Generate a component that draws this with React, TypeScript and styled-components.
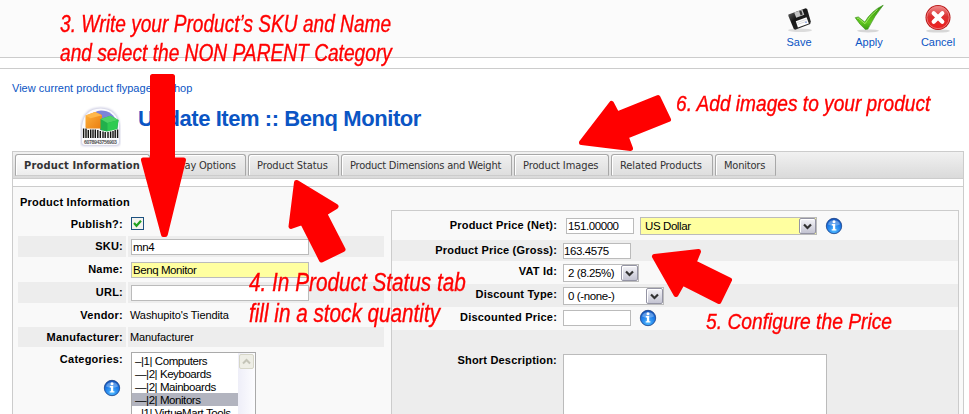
import React from "react";
import styled, { createGlobalStyle, css } from "styled-components";

const Global = createGlobalStyle`
  * { box-sizing: border-box; }
  body { margin: 0; background: #fff; overflow: hidden; }
`;

const Page = styled.div`
  position: relative;
  width: 969px;
  height: 414px;
  overflow: hidden;
  background: #fff;
  color: #000;
  font: 11px/13px "Liberation Sans", Arial, sans-serif;
  white-space: nowrap;
`;

const Toolbar = styled.header`
  display: flex;
  justify-content: flex-end;
  height: 58px;
  padding-top: 4px;
  background: #fbfbfb;
  border-bottom: 1px solid #ccc;
`;

const ToolButton = styled.a<{ $width: number }>`
  display: flex;
  flex-direction: column;
  align-items: center;
  gap: 3px;
  width: ${(p) => p.$width}px;
  color: #0b55c4;
`;

const Divider = styled.div`
  height: 11px;
  border-bottom: 1px solid #ccc;
`;

const Flypage = styled.a`
  display: block;
  margin: 13px 0 0 12px;
  line-height: 13px;
  letter-spacing: 0.02px;
  color: #0b55c4;
`;

const Heading = styled.div`
  display: flex;
  height: 56px;
  padding: 11px 0 0 80px;
  gap: 17px;
`;

const Title = styled.h1`
  margin: 1px 0 0;
  font: bold 22px/24px "Liberation Sans", Arial, sans-serif;
  letter-spacing: -0.43px;
  color: #0b55c4;
`;

const TabPane = styled.main`
  width: 952px;
  margin-left: 12px;
  border: 1px solid #ccc;
  border-bottom: 0;
`;

const TabBar = styled.nav`
  display: flex;
  gap: 2px;
  height: 27px;
  padding: 2px 2px 0;
  background: linear-gradient(#f1f1f1, #dadada);
  border-bottom: 1px solid #ccc;
`;

const Tab = styled.div<{ $width: number; $active?: boolean; $tight?: number }>`
  width: ${(p) => p.$width}px;
  height: 22px;
  padding-left: 8px;
  border: 1px solid #a8a8a8;
  border-bottom-color: #ccc;
  border-radius: 3px 3px 0 0;
  box-shadow: inset 1px 1px 0 #fff;
  background: linear-gradient(#f0f0f0, #dedede);
  color: #333;
  font: 11px/21px "DejaVu Sans Condensed", "DejaVu Sans", Tahoma, sans-serif;
  letter-spacing: ${(p) => p.$tight ?? -0.1}px;
  ${(p) =>
    p.$active &&
    css`
      font-weight: bold;
      background: linear-gradient(#fff, #ececec);
    `}
`;

const Panel = styled.section`
  display: flex;
  gap: 7px;
  height: 240px;
  margin-top: 7px;
  padding: 0 4px 0 5px;
  background: #f9f9f9;
  border-top: 1px solid #ccc;
`;

const InfoColumn = styled.div`
  width: 366px;
`;

const SectionTitle = styled.h2`
  margin: 9px 0 5px 2px;
  font: bold 11px/13px "Liberation Sans", Arial, sans-serif;
  letter-spacing: 0.25px;
`;

const InfoRow = styled.div<{ $height?: number; $shaded?: boolean }>`
  display: grid;
  grid-template-columns: 108px 256px;
  column-gap: 2px;
  height: ${(p) => p.$height ?? 21}px;
  margin-bottom: 2px;
  > * { background: ${(p) => (p.$shaded ? "#ededed" : "transparent")}; }
`;

const InfoLabel = styled.div`
  padding: 4px 3px 0 0;
  text-align: right;
  font-weight: bold;
  letter-spacing: 0.24px;
`;

const InfoValue = styled.div`
  display: flex;
  align-items: flex-start;
  padding: 3px 0 0 3px;
`;

const PlainValue = styled.div`
  padding: 4px 0 0 2px;
  letter-spacing: -0.1px;
`;

const HelpSlot = styled.div`
  display: flex;
  justify-content: flex-end;
  padding: 13px 2px 0 0;
`;

const Field = styled.div<{ $width: number; $highlight?: boolean; $tight?: boolean }>`
  width: ${(p) => p.$width}px;
  height: 16px;
  padding-left: ${(p) => (p.$tight ? 0 : 1)}px;
  border: 1px solid #bbb;
  background: ${(p) => (p.$highlight ? "#ffffa0" : "#fff")};
  font-size: 11.5px;
  line-height: 15px;
  letter-spacing: -0.42px;
`;

const CheckBox = styled.div`
  display: flex;
  align-items: center;
  justify-content: center;
  width: 13px;
  height: 13px;
  border: 1px solid #1d5180;
  background: #f3f3ef;
`;

const CategoryList = styled.div`
  display: flex;
  width: 125px;
  height: 80px;
  border: 1px solid #aaa;
  background: #fff;
`;

const Options = styled.div`
  flex: 1;
  padding-top: 1px;
`;

const Option = styled.div<{ $selected?: boolean }>`
  height: 13px;
  padding-left: 3px;
  background: ${(p) => (p.$selected ? "#b2b4bf" : "transparent")};
  font-size: 11.5px;
  line-height: 15px;
  letter-spacing: -0.43px;
`;

const ScrollTrack = styled.div`
  width: 17px;
  padding: 1px;
  background: linear-gradient(90deg, #eeeef8, #fdfdff);
`;

const ScrollButton = styled.div`
  display: flex;
  align-items: center;
  justify-content: center;
  width: 15px;
  height: 15px;
  border: 1px solid #d6d6c8;
  border-radius: 2px;
  background: #eeeee6;
`;

const PriceColumn = styled.div`
  width: 569px;
  margin-top: 23px;
  border: 1px solid #ccc;
  border-bottom: 0;
`;

const PriceRow = styled.div<{ $height: number; $top: number; $shaded?: boolean }>`
  display: flex;
  align-items: flex-start;
  height: ${(p) => p.$height}px;
  padding-top: ${(p) => p.$top}px;
  background: ${(p) => (p.$shaded ? "#ededed" : "#f9f9f9")};
`;

const PriceLabel = styled.div<{ $drop?: number; $gap?: number }>`
  width: 165px;
  margin: ${(p) => p.$drop ?? 1}px ${(p) => p.$gap ?? 6}px 0 0;
  text-align: right;
  font-weight: bold;
  letter-spacing: 0.2px;
`;

const SelectBox = styled.div<{ $width: number; $highlight?: boolean; $offset?: number }>`
  display: flex;
  justify-content: space-between;
  width: ${(p) => p.$width}px;
  height: 18px;
  margin: -1px 0 0 ${(p) => p.$offset ?? 0}px;
  padding-left: 4px;
  border: 1px solid #bbb;
  background: ${(p) => (p.$highlight ? "#ffffa0" : "#fff")};
  font-size: 11.5px;
  line-height: 17px;
  letter-spacing: -0.4px;
`;

const SelectArrow = styled.div`
  display: flex;
  align-items: center;
  justify-content: center;
  width: 17px;
  height: 16px;
  border: 1px solid #9494a4;
  border-radius: 2px;
  box-shadow: inset 1px 1px 0 #fff;
  background: linear-gradient(#f4f4f8, #c4c4d2);
`;

const InfoSlot = styled.div`
  display: flex;
  margin: -1px 0 0 8px;
`;

const TextArea = styled.div`
  width: 264px;
  height: 90px;
  border: 1px solid #bbb;
  background: #fff;
`;

const ArrowLayer = styled.svg`
  position: absolute;
  inset: 0;
  pointer-events: none;
`;

const Note = styled.div<{ $x: number; $y: number; $size: number; $squeeze: number }>`
  position: absolute;
  left: ${(p) => p.$x}px;
  top: ${(p) => p.$y}px;
  font: italic ${(p) => p.$size}px/30px "Liberation Sans", Arial, sans-serif;
  color: #f00;
  -webkit-text-stroke: 0.35px #f00;
  transform: scaleX(${(p) => p.$squeeze});
  transform-origin: 0 0;
`;

const InfoIcon = () => (
  <svg width="18" height="18" viewBox="0 0 18 18">
    <defs>
      <radialGradient id="infoBlue" cx=".5" cy=".8" r=".8">
        <stop offset="0" stopColor="#4fbaff" />
        <stop offset=".6" stopColor="#1c7ae8" />
        <stop offset="1" stopColor="#1450b4" />
      </radialGradient>
    </defs>
    <circle cx="9" cy="9" r="7.7" fill="url(#infoBlue)" stroke="#173f86" strokeWidth=".8" />
    <path d="M3 7.5a6.2 5.6 0 0 1 12 0q-6 2.5-12 0z" fill="#fff" opacity=".3" />
    <circle cx="9" cy="4.800" r="1.500" fill="#fff" />
    <path d="M6.800 7h3.400v5.200h1.200v1.400H6.700v-1.400h1.200V8.400H6.800z" fill="#fff" />
  </svg>
);

const Chevron = () => (
  <svg width="9" height="7" viewBox="0 0 9 7">
    <path d="M1 1.5l3.5 3.5L8 1.5" fill="none" stroke="#333" strokeWidth="2.2" />
  </svg>
);

const SaveIcon = () => (
  <svg width="32" height="29" viewBox="0 0 32 29">
    <defs>
      <linearGradient id="disk" x1="0" y1="0" x2="1" y2="1">
        <stop offset="0" stopColor="#777" />
        <stop offset=".4" stopColor="#161616" />
        <stop offset="1" stopColor="#333" />
      </linearGradient>
    </defs>
    <ellipse cx="17" cy="26.2" rx="12" ry="1.8" fill="#000" opacity=".12" />
    <path d="M5.400 10.500L22.700 4.200l1.500.8 3.600 12.600-.6 2.400-15 5.800-1.400-.7-5.400-13z" fill="url(#disk)" />
    <path d="M11.200 8.600l8.200-2.800 1.900 5-8.100 3z" fill="#c4c4c4" />
    <path d="M16.200 7.300l2.100-.7 1.400 4-2.100.8z" fill="#333" />
    <path d="M12.800 17.200l10.700-3.900 2.400 6.200-11 4z" fill="#fff" />
    <path d="M14 18.600l9.500-3.300M14.700 20.400l9.600-3.400" stroke="#ccc" strokeWidth=".7" />
    <circle cx="23" cy="18.300" r=".8" fill="#68d" />
  </svg>
);

const ApplyIcon = () => (
  <svg width="32" height="29" viewBox="0 0 32 29">
    <defs>
      <linearGradient id="tick" x1="0" y1="0" x2="0" y2="1">
        <stop offset="0" stopColor="#2f8f0c" />
        <stop offset=".7" stopColor="#62c81e" />
        <stop offset="1" stopColor="#3b9c12" />
      </linearGradient>
    </defs>
    <ellipse cx="15" cy="26.800" rx="11" ry="1.600" fill="#000" opacity=".14" />
    <path d="M2.200 13.700l3.100-.8 6.500 5.200Q18 7 30.200 1.200 21.500 11.500 14.900 25.100l-2.500.4Q7 21 2.200 13.700z" fill="url(#tick)" stroke="#338d10" strokeWidth=".6" />
    <path d="M4.200 14.500l1-.4 6.800 5.600Q17 11 24.500 5.500" fill="none" stroke="#a8ea6c" strokeWidth=".9" />
  </svg>
);

const CancelIcon = () => (
  <svg width="32" height="29" viewBox="0 0 32 29">
    <defs>
      <linearGradient id="stop" x1="0" y1="0" x2="0" y2="1">
        <stop offset="0" stopColor="#ee8a8a" />
        <stop offset=".45" stopColor="#dc3030" />
        <stop offset="1" stopColor="#ee2020" />
      </linearGradient>
    </defs>
    <ellipse cx="16" cy="27" rx="12" ry="1.600" fill="#000" opacity=".14" />
    <circle cx="16" cy="13.500" r="12.500" fill="#b81414" />
    <circle cx="16" cy="13.500" r="11.200" fill="url(#stop)" stroke="#f08a8a" strokeWidth=".8" />
    <path d="M11.700 9.200l8.600 8.600M20.300 9.200l-8.600 8.600" stroke="#fff" strokeWidth="4.200" strokeLinecap="round" />
  </svg>
);

const ProductIcon = () => (
  <svg width="41" height="43" viewBox="0 0 41 43">
    <defs>
      <linearGradient id="orange" x1="0" y1="0" x2="1" y2="1">
        <stop offset="0" stopColor="#ffb340" />
        <stop offset="1" stopColor="#e8790c" />
      </linearGradient>
      <filter id="soft" x="-20%" y="-20%" width="140%" height="140%">
        <feGaussianBlur stdDeviation=".8" />
      </filter>
    </defs>
    <path d="M1 37V20Q3 2 20.500 1.500 38 2 40 20v17q0 3-3 3H4q-3 0-3-3z" fill="#c9c9e0" filter="url(#soft)" />
    <path d="M2 36V20Q4 3 20.500 2.500 37 3 39 20v16q0 3-3 3h-31q-3 0-3-3z" fill="#fbfbfe" />
    <path d="M10 10Q14 5 21 4.500q12 0 16.500 13v7H10z" fill="#7c84d8" />
    <path d="M5.500 9.500L15 6l7 3v10l-1 4-12 1.500-3.500-3z" fill="url(#orange)" />
    <path d="M5.500 9.500L15 6l7 3.300-11.500 2.900z" fill="#ffb74a" />
    <path d="M20.500 13l10-3.300 8 4.300-1.500 10-11 3-5.500-3z" fill="#22b04c" />
    <path d="M20.500 13l10-3.300 8 4.300-11 3z" fill="#4fd367" />
    <path d="M27.500 17l11-3-1.500 9.500-9.500 3z" fill="#2fcb52" />
    <path d="M4 22.500h16V24l7 1.500 11-2.500v8H4z" fill="#f4f4f4" />
    <path d="M3.600 22.500v9.500M6 22.500v9.500M8.300 24v8M10.700 23.500v8.500M13 23.500v8.500M15.300 23.500v8.500M17.800 24v8M20.300 25v7M23 25.500v6.500M25.200 26v6M28 26v6M30.600 25.500v6.500M33 25v7M35.200 24v8M37.600 23.500v8.500" stroke="#111" strokeWidth="1.400" />
    <text x="4" y="37.800" fontSize="5.200" fontFamily="Liberation Sans" fontWeight="bold" fill="#555" textLength="33">6078943756903</text>
  </svg>
);

const Arrows = () => (
  <ArrowLayer width="969" height="414" viewBox="0 0 969 414" fill="#f00" stroke="#f00" strokeWidth="5" strokeLinejoin="round">
    <path d="M152.500 76.500h20v83.500h11L165.300 234.500h-1.800L143.500 160h9z" />
    <path d="M581.500 142.500L611.500 103.500l5.500 10.500 41-16.500 10.500 22L626 136.500l4.500 12z" />
    <path d="M296.500 182.500L336 206.500l-11.500 7 18.500 36L321.500 260 302.500 222.500 291 226.500z" />
    <path d="M654.500 256.500L698.500 251.500l-4.500 11 35.500 17.500-10.500 21.500L682.500 283l-6.500 11.500z" />
  </ArrowLayer>
);

export default function App() {
  return (
    <Page>
      <Global />
      <Toolbar>
        <ToolButton $width={64}><SaveIcon />Save</ToolButton>
        <ToolButton $width={76}><ApplyIcon />Apply</ToolButton>
        <ToolButton $width={62}><CancelIcon />Cancel</ToolButton>
      </Toolbar>
      <Divider />
      <Flypage>View current product flypage in Shop</Flypage>
      <Heading>
        <ProductIcon />
        <Title>Update Item :: Benq Monitor</Title>
      </Heading>
      <TabPane>
        <TabBar>
          <Tab $width={135} $active $tight={0.17}>Product Information</Tab>
          <Tab $width={94} $tight={-0.2}>Display Options</Tab>
          <Tab $width={91}>Product Status</Tab>
          <Tab $width={171} $tight={-0.23}>Product Dimensions and Weight</Tab>
          <Tab $width={95}>Product Images</Tab>
          <Tab $width={102}>Related Products</Tab>
          <Tab $width={61} $tight={-0.2}>Monitors</Tab>
        </TabBar>
        <Panel>
          <InfoColumn>
            <SectionTitle>Product Information</SectionTitle>
            <InfoRow $height={20}>
              <InfoLabel>Publish?:</InfoLabel>
              <InfoValue>
                <CheckBox>
                  <svg width="9" height="9" viewBox="0 0 9 9"><path d="M1 4l2.500 2.800L8 1.800" fill="none" stroke="#21a121" strokeWidth="2.200" /></svg>
                </CheckBox>
              </InfoValue>
            </InfoRow>
            <InfoRow $shaded>
              <InfoLabel>SKU:</InfoLabel>
              <InfoValue><Field $width={178}>mn4</Field></InfoValue>
            </InfoRow>
            <InfoRow>
              <InfoLabel>Name:</InfoLabel>
              <InfoValue><Field $width={178} $highlight>Benq Monitor</Field></InfoValue>
            </InfoRow>
            <InfoRow $shaded>
              <InfoLabel>URL:</InfoLabel>
              <InfoValue><Field $width={178} /></InfoValue>
            </InfoRow>
            <InfoRow $height={20}>
              <InfoLabel>Vendor:</InfoLabel>
              <PlainValue>Washupito's Tiendita</PlainValue>
            </InfoRow>
            <InfoRow $height={20} $shaded>
              <InfoLabel>Manufacturer:</InfoLabel>
              <PlainValue>Manufacturer</PlainValue>
            </InfoRow>
            <InfoRow $height={80}>
              <InfoLabel>
                Categories:
                <HelpSlot><InfoIcon /></HelpSlot>
              </InfoLabel>
              <InfoValue>
                <CategoryList>
                  <Options>
                    <Option>–|1| Computers</Option>
                    <Option>—|2| Keyboards</Option>
                    <Option>—|2| Mainboards</Option>
                    <Option $selected>—|2| Monitors</Option>
                    <Option>–|1| VirtueMart Tools</Option>
                  </Options>
                  <ScrollTrack>
                    <ScrollButton>
                      <svg width="9" height="7" viewBox="0 0 9 7"><path d="M1 5.500L4.500 2 8 5.500" fill="none" stroke="#c4c4b8" strokeWidth="2" /></svg>
                    </ScrollButton>
                  </ScrollTrack>
                </CategoryList>
              </InfoValue>
            </InfoRow>
          </InfoColumn>
          <PriceColumn>
            <PriceRow $height={29} $top={7}>
              <PriceLabel $gap={9}>Product Price (Net):</PriceLabel>
              <Field $width={68}>151.00000</Field>
              <SelectBox $width={177} $highlight $offset={6}>US Dollar<SelectArrow><Chevron /></SelectArrow></SelectBox>
              <InfoSlot><InfoIcon /></InfoSlot>
            </PriceRow>
            <PriceRow $height={21} $top={3} $shaded>
              <PriceLabel>Product Price (Gross):</PriceLabel>
              <Field $width={68} $tight>163.4575</Field>
            </PriceRow>
            <PriceRow $height={23} $top={4}>
              <PriceLabel $drop={0}>VAT Id:</PriceLabel>
              <SelectBox $width={76}>2 (8.25%)<SelectArrow><Chevron /></SelectArrow></SelectBox>
            </PriceRow>
            <PriceRow $height={23} $top={4} $shaded>
              <PriceLabel $drop={0}>Discount Type:</PriceLabel>
              <SelectBox $width={101}>0 (-none-)<SelectArrow><Chevron /></SelectArrow></SelectBox>
            </PriceRow>
            <PriceRow $height={23} $top={3}>
              <PriceLabel>Discounted Price:</PriceLabel>
              <Field $width={68} />
              <InfoSlot><InfoIcon /></InfoSlot>
            </PriceRow>
            <PriceRow $height={90} $top={24} $shaded>
              <PriceLabel $drop={0}>Short Description:</PriceLabel>
              <TextArea />
            </PriceRow>
          </PriceColumn>
        </Panel>
      </TabPane>
      <Arrows />
      <Note $x={60} $y={9} $size={23} $squeeze={0.831}>3. Write your Product’s SKU and Name</Note>
      <Note $x={60} $y={38} $size={23} $squeeze={0.833}>and select the NON PARENT Category</Note>
      <Note $x={676} $y={89} $size={22} $squeeze={0.869}>6. Add images to your product</Note>
      <Note $x={249} $y={267} $size={25} $squeeze={0.83}>4. In Product Status tab</Note>
      <Note $x={249} $y={298} $size={25} $squeeze={0.828}>fill in a stock quantity</Note>
      <Note $x={706} $y={307} $size={22} $squeeze={0.874}>5. Configure the Price</Note>
    </Page>
  );
}
